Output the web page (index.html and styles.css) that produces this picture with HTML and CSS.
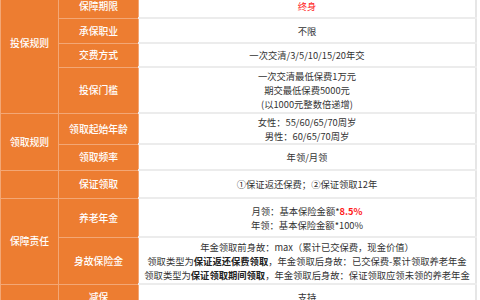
FILE: index.html
```html
<!DOCTYPE html>
<html lang="zh">
<head>
<meta charset="utf-8">
<link rel="stylesheet" href="styles.css">
</head>
<body>
<table class="plan">
  <colgroup>
    <col class="c1"><col class="c2"><col class="c3">
  </colgroup>
  <tbody>
    <tr class="h22">
      <td class="grp" rowspan="5">投保规则</td>
      <td class="lbl">投保年龄</td>
      <td class="val">出生28天-70周岁</td>
    </tr>
    <tr class="h24">
      <td class="lbl">保障期限</td>
      <td class="val"><span class="red">终身</span></td>
    </tr>
    <tr class="h25">
      <td class="lbl">承保职业</td>
      <td class="val">不限</td>
    </tr>
    <tr class="h24">
      <td class="lbl">交费方式</td>
      <td class="val">一次交清/3/5/10/15/20年交</td>
    </tr>
    <tr class="h46">
      <td class="lbl">投保门槛</td>
      <td class="val">一次交清最低保费1万元<br>期交最低保费5000元<br>(以1000元整数倍递增)</td>
    </tr>
    <tr class="h31">
      <td class="grp" rowspan="2">领取规则</td>
      <td class="lbl">领取起始年龄</td>
      <td class="val">女性：55/60/65/70周岁<br>男性：60/65/70周岁</td>
    </tr>
    <tr class="h26">
      <td class="lbl">领取频率</td>
      <td class="val">年领/月领</td>
    </tr>
    <tr class="h28">
      <td class="grp cont"></td>
      <td class="lbl">保证领取</td>
      <td class="val">①保证返还保费；②保证领取12年</td>
    </tr>
    <tr class="h39">
      <td class="grp" rowspan="2">保障责任</td>
      <td class="lbl">养老年金</td>
      <td class="val">月领：基本保险金额*<span class="red b">8.5%</span><br>年领：基本保险金额*100%</td>
    </tr>
    <tr class="h47">
      <td class="lbl">身故保险金</td>
      <td class="val">年金领取前身故：max（累计已交保费，现金价值）<br>领取类型为<b>保证返还保费领取</b>，年金领取后身故：已交保费-累计领取养老年金<br>领取类型为<b>保证领取期间领取</b>，年金领取后身故：保证领取应领未领的养老年金</td>
    </tr>
    <tr class="h26">
      <td class="grp"></td>
      <td class="lbl">减保</td>
      <td class="val">支持</td>
    </tr>
  </tbody>
</table>
</body>
</html>
```

FILE: styles.css
```css
html, body {
  margin: 0;
  padding: 0;
  background: #ffffff;
  overflow: hidden;
}

.plan {
  margin-top: -29px;
  width: 477px;
  border-collapse: collapse;
  table-layout: fixed;
  font-family: "Noto Sans CJK SC", "Noto Sans", sans-serif;
  font-size: 9.3px;
  line-height: 14px;
}

.c1 { width: 58px; }
.c2 { width: 80px; }

.plan td {
  padding: 0 2px;
  text-align: center;
  vertical-align: middle;
}

.grp, .lbl {
  background: #ed7d31;
  color: #ffffff;
  font-weight: 500;
  font-size: 9.8px;
  border: 1px solid #f3a775;
}

.grp.cont { border-top-color: #ed7d31; }

.val {
  color: #333333;
  border-top: 2px solid #ececec;
  border-bottom: 2px solid #ececec;
  border-right: 2px solid #e6e6e6;
  border-left: 1px solid #f3a775;
}

.red { color: #ff1a1a; }
.b { font-weight: 700; }
.val b { font-weight: 700; color: #222222; }

.h22 { height: 22px; }
.h24 { height: 24px; }
.h25 { height: 25px; }
.h26 { height: 26px; }
.h28 { height: 28px; }
.h31 { height: 31px; }
.h39 { height: 39px; }
.h46 { height: 46px; }
.h47 { height: 47px; }
```
